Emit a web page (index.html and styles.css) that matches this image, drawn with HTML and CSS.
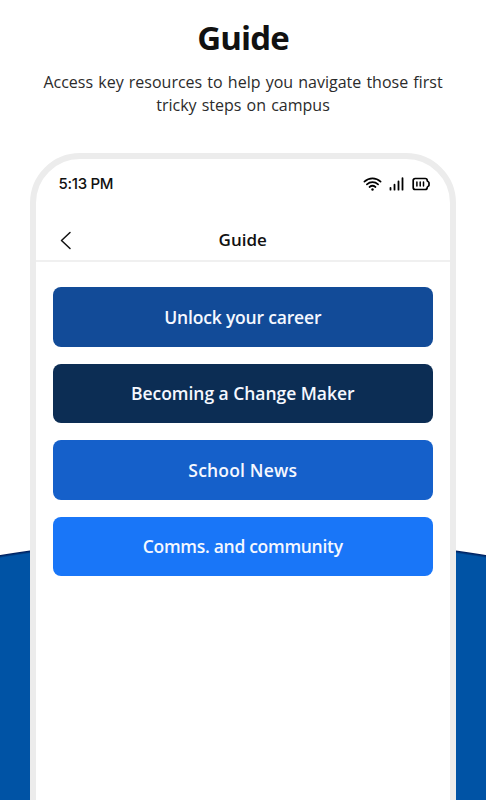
FILE: index.html
```
<!DOCTYPE html>
<html lang="en">
<head>
    <meta charset="UTF-8">
    <title>Guide</title>
    <link rel="stylesheet" href="styles.css">
</head>
<body>
<div class="page">
    <header class="intro">
        <h1 class="introTitle">Guide</h1>
        <p class="introText">Access key resources to help you navigate those first<br>tricky steps on campus</p>
    </header>
    <main class="phone">
        <div class="statusBar">
            <span class="time">5:13 PM</span>
            <div class="statusIcons">
                <svg width="19" height="14" viewBox="0 0 19 14" fill="none" stroke="#000" stroke-width="1.7" stroke-linecap="round">
                    <path d="M1.4 4.6C6 .2 13 .2 17.6 4.6M3.9 7.4c3.3-3 7.9-3 11.2 0M6.5 10c1.8-1.5 4.2-1.500 6 0"/>
                    <circle cx="9.5" cy="12.500" r="1.2" fill="#000" stroke="none"/>
                </svg>
                <svg width="15" height="14" viewBox="0 0 15 14" stroke="#000" stroke-width="1.8" stroke-linecap="round">
                    <path d="M1.5 10.8v1.9M5.5 7.7v5M9.5 4.5v8.2M13.5 1.2v11.5"/>
                </svg>
                <svg width="18" height="14" viewBox="0 0 18 14" fill="none" stroke="#000" stroke-width="1.7" stroke-linecap="round" stroke-linejoin="round">
                    <path d="M3.2 1.500h10a2 2 0 0 1 2 2c0 1 1.800 1.200 1.800 2.200v2.600c0 1-1.800 1.200-1.800 2.200a2 2 0 0 1-2 2h-10a2 2 0 0 1-2-2v-7a2 2 0 0 1 2-2z"/>
                    <path d="M4.9 5v4M8.2 5v4M11.5 5v4" stroke-width="1.5"/>
                </svg>
            </div>
        </div>
        <nav class="navBar">
            <svg class="back" width="12" height="19" viewBox="0 0 12 19" fill="none" stroke="#111" stroke-width="1.5" stroke-linecap="round" stroke-linejoin="round">
                <path d="M10 1.500L1.500 9.500l8.500 8"/>
            </svg>
            <h2 class="navTitle">Guide</h2>
        </nav>
        <div class="guideList">
            <a class="guideButton career">Unlock your career</a>
            <a class="guideButton maker">Becoming a Change Maker</a>
            <a class="guideButton news">School News</a>
            <a class="guideButton comms">Comms. and community</a>
        </div>
    </main>
</div>
</body>
</html>
```
FILE: styles.css
```
* {
    box-sizing: border-box;
}
body {
    margin: 0;
    font-family: "Open Sans", "Noto Sans", sans-serif;
    color: #111;
}
/* blue hill behind the phone */
.page {
    height: 800px;
    overflow: hidden;
    background: radial-gradient(circle at 243px 2055.5px, #0053a5 1517px, #003f86 1518px, #002060 1519.5px, #fff 1520.5px);
}
.intro {
    height: 153px;
    padding-top: 15px;
    text-align: center;
}
.introTitle {
    margin: 0;
    font-size: 33px;
    line-height: 45px;
    font-weight: 700;
    letter-spacing: -0.9px;
}
.introText {
    margin: 11px 0 0;
    font-size: 16px;
    line-height: 23px;
    word-spacing: 1px;
    color: #2b2b2b;
}
.phone {
    width: 426.5px;
    height: 720px;
    margin-left: 29.5px;
    border: 6px solid #ececec;
    border-radius: 50px;
    background: #fff;
}
.statusBar {
    display: flex;
    justify-content: space-between;
    align-items: center;
    height: 49px;
    padding: 0 20.5px 0 23px;
}
.time {
    font-family: Inter, sans-serif;
    font-size: 15px;
    font-weight: 500;
    letter-spacing: -0.3px;
}
.statusIcons {
    display: flex;
    align-items: center;
    gap: 7.5px;
}
.statusIcons svg {
    display: block;
}
.navBar {
    display: grid;
    grid-template-columns: 36px 1fr 36px;
    align-items: center;
    height: 54px;
    padding-top: 12px;
    border-bottom: 2px solid #f0f0f0;
}
.back {
    justify-self: end;
}
.navTitle {
    margin: 0;
    font-size: 17px;
    line-height: 24px;
    font-weight: 600;
    text-align: center;
}
.guideList {
    display: flex;
    flex-direction: column;
    gap: 17px;
    padding: 25px 17.5px 0;
}
.guideButton {
    display: flex;
    align-items: center;
    justify-content: center;
    height: 59.5px;
    border-radius: 8px;
    font-size: 17.5px;
    font-weight: 600;
    color: #f5f8ff;
}
.career {
    background: #124b98;
    letter-spacing: -0.18px;
}
.maker {
    background: #0c2d54;
    letter-spacing: -0.04px;
}
.news {
    background: #1560ca;
    letter-spacing: 0.18px;
}
.comms {
    background: #1976f8;
    letter-spacing: -0.3px;
}
```
